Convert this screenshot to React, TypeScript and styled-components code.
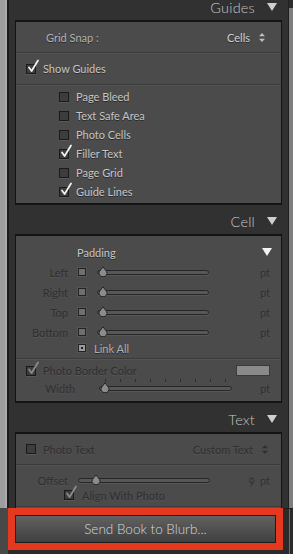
import React from "react";
import styled, { createGlobalStyle } from "styled-components";

const GlobalStyle = createGlobalStyle`
  html, body {
    margin: 0;
    padding: 0;
    background: #2f2f2f;
  }
  body {
    font-family: "Lato", "Liberation Sans", sans-serif;
  }
`;

const ON = "#c6c6c6";
const OFF = "#2f2f2f";

/* ─ frame ─ */
const Screen = styled.div`
  width: 293px;
  height: 554px;
  overflow: hidden;
  display: flex;
  flex-direction: column;
  background: #2f2f2f;
`;

const Main = styled.div`
  display: flex;
  height: 508px;
  flex: none;
  overflow: hidden;
`;

const Gutter = styled.div`
  width: 7px;
  flex: none;
  background: linear-gradient(to right, #9d9d9d 0 5px, #ababab 5px 7px);
  border-right: 2px solid #1b1b1b;
`;

const Content = styled.div`
  flex: 1;
  padding: 0 6px;
  background: #313131;
  display: flex;
  flex-direction: column;
`;

const Scroll = styled.div`
  width: 4px;
  flex: none;
  border-left: 1px solid #1f1f1f;
  background: linear-gradient(to bottom, #2c2c2c 0 8px, #7d7d7d 8px);
`;

/* ─ section header ─ */
const Header = styled.div<{ $h: number }>`
  height: ${(p) => p.$h}px;
  flex: none;
  display: flex;
  justify-content: flex-end;
  align-items: flex-end;
  gap: 12px;
  padding: 0 5px 4px 0;
  box-sizing: border-box;
  color: #c4c4c4;
  font-size: 14.5px;
  line-height: 16px;
  font-weight: 300;
  letter-spacing: 0.2px;
  svg {
    margin-bottom: 5px;
  }
`;

const Panel = styled.div`
  flex: none;
  background: #4b4b4b;
  border: 1px solid #141414;
  border-top-width: 2px;
  border-bottom-width: 2px;
  display: flex;
  flex-direction: column;
`;

const Block = styled.div<{ $pt?: number; $pb?: number }>`
  display: flex;
  flex-direction: column;
  padding-top: ${(p) => p.$pt ?? 0}px;
  padding-bottom: ${(p) => p.$pb ?? 0}px;
  & + & {
    border-top: 1px solid #3b3b3b;
    box-shadow: inset 0 1px 0 #545454;
  }
`;

const Row = styled.div<{ $h: number; $pl?: number; $pr?: number; $gap?: number }>`
  height: ${(p) => p.$h}px;
  display: flex;
  align-items: center;
  gap: ${(p) => p.$gap ?? 0}px;
  padding-left: ${(p) => p.$pl ?? 0}px;
  padding-right: ${(p) => p.$pr ?? 0}px;
  font-size: 11px;
`;

const Label = styled.span<{ $off?: boolean; $c?: string }>`
  color: ${(p) => p.$c ?? (p.$off ? OFF : ON)};
  text-shadow: ${(p) => (p.$off ? "0 1px 0 rgba(255,255,255,0.07)" : "0 1px 0 #2a2a2a")};
  white-space: nowrap;
`;

const SideLabel = styled(Label)<{ $w: number; $left?: boolean }>`
  width: ${(p) => p.$w}px;
  flex: none;
  text-align: ${(p) => (p.$left ? "left" : "right")};
`;

const Push = styled.span<{ $gap?: number }>`
  margin-left: auto;
  display: flex;
  align-items: center;
  gap: ${(p) => p.$gap ?? 9}px;
`;

/* ─ checkbox ─ */
const Box = styled.span`
  position: relative;
  width: 8px;
  height: 8px;
  flex: none;
  border: 1px solid #1a1a1a;
  background: #3d3d3d;
  box-shadow: 0 1px 0 rgba(255, 255, 255, 0.08);
`;

const Tick = styled.svg`
  position: absolute;
  left: 1px;
  top: -5px;
  overflow: visible;
`;

const Check: React.FC<{ on?: boolean; dim?: boolean }> = ({ on, dim }) => (
  <Box>
    {on && (
      <Tick width="11" height="12" viewBox="0 0 11 12">
        <path
          d="M1 7.5 L3.6 11 L10 0.5"
          fill="none"
          stroke={dim ? "#8c8c8c" : "#f2f2f2"}
          strokeWidth="1.8"
          strokeLinecap="round"
          strokeLinejoin="round"
        />
      </Tick>
    )}
  </Box>
);

const Square = styled.span<{ $dot?: boolean; $ml?: number }>`
  width: 6px;
  height: 6px;
  flex: none;
  margin-left: ${(p) => p.$ml ?? 0}px;
  border: 1px solid #222;
  background: ${(p) => (p.$dot ? "#9a9a9a" : "#6f6f6f")};
  box-shadow: 0 0 0 1px rgba(255, 255, 255, 0.06);
  display: flex;
  align-items: center;
  justify-content: center;
  &::after {
    content: "";
    display: ${(p) => (p.$dot ? "block" : "none")};
    width: 2px;
    height: 2px;
    background: #1e1e1e;
  }
`;

/* ─ slider ─ */
const Track = styled.span<{ $w: number; $ml: number }>`
  position: relative;
  display: block;
  width: ${(p) => p.$w}px;
  height: 3px;
  flex: none;
  margin-left: ${(p) => p.$ml}px;
  border: 1px solid #262626;
  border-radius: 3px;
  background: #575757;
  box-shadow: 0 1px 0 rgba(255, 255, 255, 0.07);
`;

const Knob = styled.svg`
  position: absolute;
  top: -5px;
`;

const Ticks = styled.span`
  position: absolute;
  left: 5px;
  right: 5px;
  top: -8px;
  height: 4px;
  display: flex;
  justify-content: space-between;
  & > i {
    width: 1px;
    height: 3px;
    background: #2e2e2e;
  }
`;

const Slider: React.FC<{ w: number; at: number; ml?: number; ticks?: boolean }> = ({
  w,
  at,
  ml = 0,
  ticks,
}) => (
  <Track $w={w} $ml={ml}>
    {ticks && (
      <Ticks>
        {Array.from({ length: 9 }).map((_, i) => (
          <i key={i} />
        ))}
      </Ticks>
    )}
    <Knob width="12" height="11" viewBox="0 0 12 11" style={{ left: at }}>
      <path d="M6 0.8 L9.6 5.6 A4 3.6 0 1 1 2.4 5.6 Z" fill="#8b8b8b" stroke="#262626" strokeWidth="1" />
    </Knob>
  </Track>
);

/* ─ small glyphs ─ */
const Down: React.FC<{ size?: number; color?: string }> = ({ size = 10, color = "#cfcfcf" }) => (
  <svg width={size} height={size * 0.8} viewBox="0 0 10 8">
    <polygon points="0,0 10,0 5,8" fill={color} />
  </svg>
);

const UpDown: React.FC<{ color: string }> = ({ color }) => (
  <svg width="6" height="9" viewBox="0 0 6 9">
    <polygon points="3,0 6,3.3 0,3.3" fill={color} />
    <polygon points="0,5.7 6,5.7 3,9" fill={color} />
  </svg>
);

const Swatch = styled.span`
  width: 32px;
  height: 9px;
  background: #8a8a8a;
  border: 1px solid #3a3a3a;
`;

/* ─ bottom bar ─ */
const Bottom = styled.div`
  flex: 1;
  display: flex;
  background: #2b2b2b;
`;

const BottomSide = styled.div`
  width: 8px;
  flex: none;
  background: #484848;
`;

const Highlight = styled.div`
  width: 275px;
  height: 42px;
  flex: none;
  box-sizing: border-box;
  border: 7px solid #e5391f;
  display: flex;
`;

const SendButton = styled.button`
  flex: 1;
  margin: 0;
  border: 1px solid #1c1c1c;
  background: linear-gradient(to bottom, #616161, #404040);
  color: #d8d8d8;
  font-family: "Lato", "Liberation Sans", sans-serif;
  font-size: 13.5px;
  font-weight: 300;
  padding: 0;
  cursor: pointer;
`;

const BottomRight = styled.div`
  flex: 1;
  border-top: 1px solid #1e1e1e;
  background: linear-gradient(to right, #2a2a2a 0 6px, #6d6d6d 6px 7px, #2a2a2a 7px);
`;

const guides: [string, boolean][] = [
  ["Page Bleed", false],
  ["Text Safe Area", false],
  ["Photo Cells", false],
  ["Filler Text", true],
  ["Page Grid", false],
  ["Guide Lines", true],
];

const paddingRows = ["Left", "Right", "Top", "Bottom"];

export default function App() {
  return (
    <>
      <GlobalStyle />
      <Screen>
        <Main>
          <Gutter />
          <Content>
            <Header $h={20}>
              <span>Guides</span>
              <Down />
            </Header>
            <Panel>
              <Block>
                <Row $h={30} $pl={30} $pr={16}>
                  <Label $c="#b4b4b4">Grid Snap :</Label>
                  <Push>
                    <Label $c="#d2d2d2">Cells</Label>
                    <UpDown color="#bdbdbd" />
                  </Push>
                </Row>
              </Block>
              <Block>
                <Row $h={31} $pl={10} $gap={7}>
                  <Check on />
                  <Label>Show Guides</Label>
                </Row>
              </Block>
              <Block $pt={2} $pb={2}>
                {guides.map(([name, on]) => (
                  <Row key={name} $h={19} $pl={43} $gap={7}>
                    <Check on={on} />
                    <Label>{name}</Label>
                  </Row>
                ))}
              </Block>
            </Panel>

            <Header $h={29}>
              <span>Cell</span>
              <Down />
            </Header>
            <Panel>
              <Block $pt={6} $pb={4}>
                <Row $h={20} $pl={61} $pr={9}>
                  <Label>Padding</Label>
                  <Push>
                    <Down size={10} color="#f4f4f4" />
                  </Push>
                </Row>
                {paddingRows.map((name) => (
                  <Row key={name} $h={20} $pr={11}>
                    <SideLabel $w={52} $off>
                      {name}
                    </SideLabel>
                    <Square $ml={10} />
                    <Slider w={110} at={-1} ml={11} />
                    <Push>
                      <Label $off>pt</Label>
                    </Push>
                  </Row>
                ))}
                <Row $h={12} $pl={62} $gap={8}>
                  <Square $dot />
                  <Label $c="#b0b0b0">Link All</Label>
                </Row>
              </Block>
              <Block $pt={3} $pb={4}>
                <Row $h={17} $pl={10} $pr={11} $gap={7}>
                  <Check on dim />
                  <Label $off>Photo Border Color</Label>
                  <Push>
                    <Swatch />
                  </Push>
                </Row>
                <Row $h={18} $pl={29} $pr={11}>
                  <SideLabel $w={54} $off $left>
                    Width
                  </SideLabel>
                  <Slider w={131} at={-1} ticks />
                  <Push>
                    <Label $off>pt</Label>
                  </Push>
                </Row>
              </Block>
            </Panel>

            <Header $h={29}>
              <span>Text</span>
              <Down />
            </Header>
            <Panel>
              <Block>
                <Row $h={30} $pl={10} $pr={13} $gap={7}>
                  <Check />
                  <Label $off>Photo Text</Label>
                  <Push>
                    <Label $off>Custom Text</Label>
                    <UpDown color="#2f2f2f" />
                  </Push>
                </Row>
              </Block>
              <Block $pt={6} $pb={5}>
                <Row $h={18} $pr={11}>
                  <SideLabel $w={52} $off>
                    Offset
                  </SideLabel>
                  <Slider w={130} at={11} ml={10} />
                  <Push $gap={5}>
                    <Label $c="#444">9</Label>
                    <Label $off>pt</Label>
                  </Push>
                </Row>
                <Row $h={12} $pl={48} $gap={8}>
                  <Check on dim />
                  <Label $off>Align With Photo</Label>
                </Row>
              </Block>
              <Block $pt={12} />
            </Panel>
          </Content>
          <Scroll />
        </Main>
        <Bottom>
          <BottomSide />
          <Highlight>
            <SendButton type="button">Send Book to Blurb...</SendButton>
          </Highlight>
          <BottomRight />
        </Bottom>
      </Screen>
    </>
  );
}
